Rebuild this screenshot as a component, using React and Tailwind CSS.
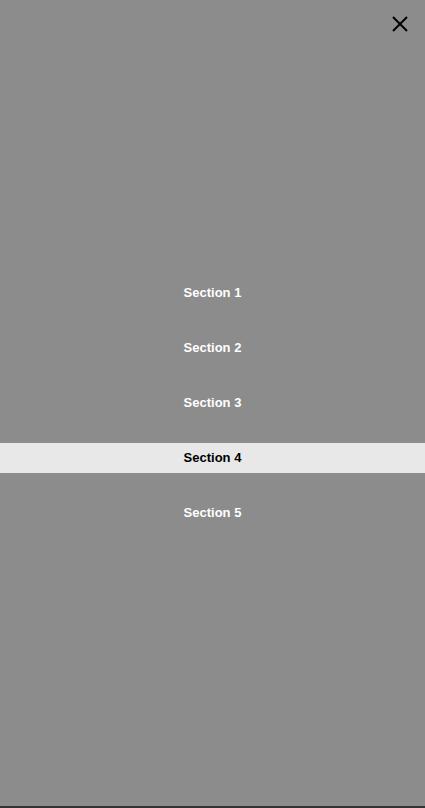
import React, { useState } from "react";

const sections = ["Section 1", "Section 2", "Section 3", "Section 4", "Section 5"];

const App = () => {
  const [active, setActive] = useState(3);

  return (
    <div className="flex h-screen flex-col font-['Liberation_Sans',Arial,sans-serif]">
      <div className="relative flex flex-1 items-center justify-center bg-[#8c8c8c]">
        <button
          type="button"
          className="absolute right-[16px] top-[15px] flex h-[18px] w-[18px] items-center justify-center text-black"
        >
          <svg width="18" height="18" viewBox="0 0 18 18" fill="none">
            <path d="M2 2L16 16M16 2L2 16" stroke="currentColor" strokeWidth="2" />
          </svg>
        </button>

        <nav className="flex w-full flex-col gap-[25px]">
          {sections.map((label, idx) => (
            <button
              key={label}
              type="button"
              onClick={() => setActive(idx)}
              className={`flex h-[30px] w-full items-center justify-center text-[13px] font-bold ${
                idx === active ? "bg-[#e8e8e8] text-black" : "text-white"
              }`}
            >
              {label}
            </button>
          ))}
        </nav>
      </div>
      <div className="h-[2px] bg-[#333333]" />
    </div>
  );
};

export default App;
